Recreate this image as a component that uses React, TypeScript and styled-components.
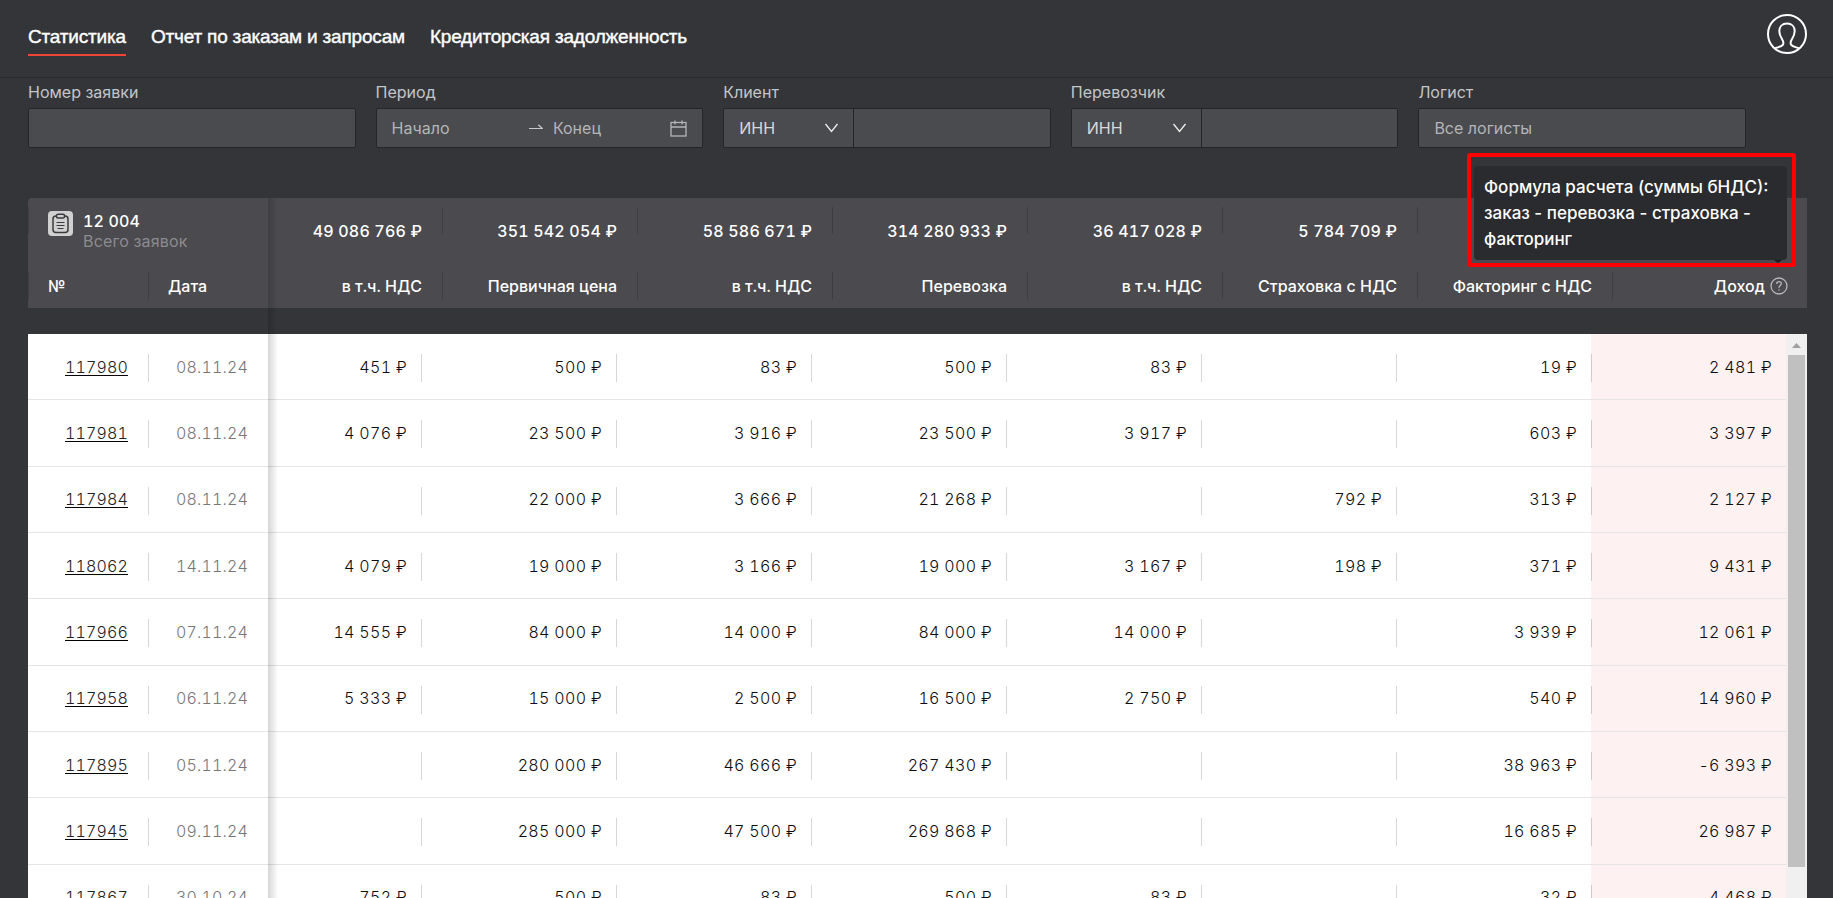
import React from "react";
import styled, { createGlobalStyle } from "styled-components";

const GlobalStyle = createGlobalStyle`
  * { box-sizing: border-box; }
  html, body { margin: 0; background: #343539; }
  body, input, select, button {
    font-family: Inter, "Noto Sans", sans-serif;
    font-size: 16px;
    line-height: 24px;
  }
`;

const Page = styled.div`
  display: flex;
  flex-direction: column;
  height: 100vh;
  overflow: hidden;
  color: #fff;
  background: #343539;
`;

const TopBar = styled.header`
  display: flex;
  justify-content: space-between;
  align-items: flex-start;
  flex: none;
  height: 78px;
  padding: 14px 26px 0 28px;
  border-bottom: 1px solid #2a2b2e;
`;

const Nav = styled.nav`
  display: flex;
  gap: 25px;
  padding-top: 11px;
`;

const NavLink = styled.a<{ $active?: boolean }>`
  padding-bottom: 5px;
  border-bottom: 2px solid ${(p) => (p.$active ? "#f04438" : "transparent")};
  color: #fff;
  font-family: "Liberation Sans", Arial, sans-serif;
  font-size: 19px;
  line-height: 24px;
  letter-spacing: -0.01em;
  -webkit-text-stroke: 0.4px #fff;
  text-decoration: none;
`;

const IconButton = styled.button`
  display: flex;
  padding: 0;
  border: 0;
  background: none;
  color: inherit;
  cursor: pointer;
`;

const Filters = styled.form`
  display: grid;
  grid-template-columns: repeat(5, 1fr);
  gap: 20px;
  flex: none;
  padding: 2px 87px 50px 28px;
`;

const Field = styled.div`
  display: flex;
  flex-direction: column;
  gap: 4px;
  min-width: 0;
`;

const Label = styled.label`
  color: #c4c5c7;
`;

const Control = styled.div`
  display: flex;
  align-items: center;
  height: 40px;
  border: 1px solid #242528;
  border-radius: 2px;
  background: #4a4b4e;
  color: #c4c5c7;
`;

const TextInput = styled.input`
  flex: 1;
  width: 0;
  min-width: 0;
  height: 100%;
  padding: 0 15px;
  border: 0;
  outline: none;
  background: none;
  color: #e4e4e6;
  &::placeholder { color: #b4b5b7; opacity: 1; }
`;

const RangeIcon = styled.span`
  display: flex;
  flex: none;
  padding-right: 15px;
`;

const RangeArrow = styled.span`
  display: flex;
  flex: none;
`;

const RangeStart = styled(TextInput)`
  flex: 137;
  padding: 0 0 0 15px;
`;

const RangeEnd = styled(TextInput)`
  flex: 117;
  padding: 0 0 0 10px;
`;

const SelectBox = styled.span`
  display: grid;
  align-items: center;
  flex: none;
  width: 130px;
  height: 100%;
  border-right: 1px solid #242528;
  & > * { grid-area: 1 / 1; }
  & > svg { justify-self: end; margin-right: 14px; pointer-events: none; }
`;

const Select = styled.select`
  width: 100%;
  height: 100%;
  padding: 0 15px;
  border: 0;
  appearance: none;
  outline: none;
  background: none;
  color: #d8d8da;
`;

const Board = styled.main`
  position: relative;
  display: flex;
  flex-direction: column;
  flex: 1;
  min-height: 0;
  gap: 26px;
  margin: 0 26px 0 28px;
`;

const StickyShadow = styled.div`
  position: absolute;
  top: 0;
  bottom: 0;
  left: 240px;
  width: 10px;
  background: linear-gradient(to right, rgba(0, 0, 0, 0.16), rgba(0, 0, 0, 0));
  pointer-events: none;
`;

const HeadPanel = styled.div`
  position: relative;
  flex: none;
`;

const Table = styled.table`
  width: 100%;
  border-collapse: separate;
  border-spacing: 0;
  table-layout: fixed;
  font-variant-numeric: tabular-nums;
`;

const HeadTable = styled(Table)`
  border-radius: 4px 0 0 0;
  background: #4b4a4e;
`;

const Rule = `
  background-image: linear-gradient(#3e3e42, #3e3e42);
  background-repeat: no-repeat;
  background-position: 0 9px;
`;

const HeadCell = styled.th<{ $left?: boolean; $ruled?: boolean }>`
  height: 45px;
  padding: 0 20px;
  text-align: ${(p) => (p.$left ? "left" : "right")};
  font-weight: 500;
  white-space: nowrap;
  ${Rule}
  background-size: ${(p) => (p.$ruled ? "1px 27px" : "0 0")};
`;

const TotalCell = styled.td<{ $ruled?: boolean }>`
  height: 65px;
  padding: 0 20px;
  text-align: right;
  font-weight: 500;
  letter-spacing: 0.01em;
  white-space: nowrap;
  ${Rule}
  background-size: ${(p) => (p.$ruled ? "1px 27px" : "0 0")};
`;

const Summary = styled.div`
  display: flex;
  align-items: flex-start;
  gap: 10px;
  text-align: left;
  line-height: 20px;
`;

const SummaryLabel = styled.div`
  color: #8c8c90;
  font-weight: 400;
`;

const Caption = styled.span`
  display: flex;
  justify-content: flex-end;
  align-items: center;
  gap: 5px;
`;

const IncomeHead = styled(HeadCell)`
  padding-right: 19px;
`;

const BodyPanel = styled.div`
  display: flex;
  flex: 1;
  min-height: 0;
  background: #fff;
`;

const BodyScroll = styled.div`
  flex: 1;
  min-width: 0;
  overflow: hidden;
`;

const BodyTable = styled(Table)`
  height: 597px;
`;

const Cell = styled.td<{ $tone?: "muted" | "income"; $ruled?: boolean; $pinned?: boolean }>`
  height: 66px;
  padding: 0 ${(p) => (p.$pinned ? 20 : 14)}px 0 0;
  border-bottom: 1px solid #e5e5e5;
  background-color: ${(p) => (p.$tone === "income" ? "#fdf1f1" : "#fff")};
  background-image: linear-gradient(rgba(0, 0, 0, 0.16), rgba(0, 0, 0, 0.16));
  background-repeat: no-repeat;
  background-position: 0 20px;
  background-size: ${(p) => (p.$ruled ? "1px 28px" : "0 0")};
  color: ${(p) => (p.$tone === "muted" ? "#77777a" : "#0c0c0e")};
  font-weight: 300;
  letter-spacing: ${(p) => (p.$pinned ? "0.01em" : "0.02em")};
  text-align: right;
  white-space: nowrap;
`;

const OrderLink = styled.a`
  display: inline-block;
  height: 19px;
  border-bottom: 1px solid #000;
  color: #222;
  line-height: 21px;
  text-decoration: none;
`;

const Scrollbar = styled.div`
  display: flex;
  flex-direction: column;
  align-items: center;
  flex: none;
  width: 21px;
  padding-bottom: 31px;
  background: #f0f0f0;
`;

const ScrollArrow = styled.svg`
  flex: none;
  margin: 9px 0 7px;
`;

const Thumb = styled.div`
  flex: 1;
  width: 17px;
  background: #c0c0c0;
`;

const Frame = styled.div`
  position: absolute;
  right: 11px;
  bottom: 41px;
  z-index: 2;
  width: 329px;
  padding: 9px 5px 3px 3px;
  border: 4px solid #fe0000;
  border-radius: 3px;
`;

const Tooltip = styled.div`
  position: relative;
  padding: 8px 10px;
  border-radius: 4px;
  background: #2a2b2e;
  font-size: 17px;
  font-weight: 500;
  line-height: 26px;
  &::after {
    content: "";
    position: absolute;
    right: 5px;
    top: 100%;
    border: 4px solid transparent;
    border-top: 3px solid #1c1d1f;
    border-bottom: 0;
  }
`;

const UserIcon = () => (
  <svg width="40" height="40" viewBox="0 0 40 40" fill="none" stroke="#fff" strokeWidth="2">
    <circle cx="20" cy="20" r="19" />
    <path d="M8 34.300c2.500-1.100 6.500-1.500 7.800-3.400 1.200-1.800.3-4-.7-5.600C13.200 22.300 12.300 19.800 12.300 17c0-4.500 3-7.400 7.700-7.400s7.700 2.900 7.700 7.400c0 2.800-.9 5.300-2.800 8.300-1 1.600-1.900 3.800-.7 5.600 1.300 1.900 5.300 2.300 7.800 3.400" />
  </svg>
);

const ClipboardIcon = () => (
  <svg width="25" height="25" viewBox="0 0 25 25" fill="none">
    <rect width="25" height="25" rx="4" fill="#d0d0d1" />
    <rect x="5" y="5" width="15" height="16.500" rx="3" stroke="#3b3b3f" strokeWidth="1.500" />
    <rect x="8.500" y="3.300" width="8" height="3.800" rx="1.500" fill="#d0d0d1" stroke="#3b3b3f" strokeWidth="1.500" />
    <path d="M8.500 11.500h8M8.500 14.500h8M9.500 17.500h6" stroke="#3b3b3f" strokeWidth="1.200" />
  </svg>
);

const ChevronIcon = () => (
  <svg width="14" height="12" viewBox="0 0 14 12" fill="none" stroke="#f0f0f0" strokeWidth="1.300">
    <path d="M.5 2l6 7.500 6-7.500" />
  </svg>
);

const ArrowIcon = () => (
  <svg width="14" height="10" viewBox="0 0 14 10" fill="none" stroke="#c8c8ca" strokeWidth="1.200">
    <path d="M0 5.500h13.300L9.300 1.700" />
  </svg>
);

const CalendarIcon = () => (
  <svg width="17" height="17" viewBox="0 0 17 17" fill="none" stroke="#b4b5b7" strokeWidth="1.300">
    <rect x="1" y="2.500" width="15" height="13.500" />
    <path d="M1 7h15M5 .5v4M12 .5v4" />
  </svg>
);

const HelpIcon = () => (
  <svg width="18" height="18" viewBox="0 0 18 18" fill="none" stroke="#b8b8ba" strokeWidth="1.300">
    <circle cx="9" cy="9" r="8" />
    <path d="M6.700 7c0-1.400 1-2.300 2.300-2.300s2.300.9 2.300 2.100c0 1.600-2.300 1.800-2.300 3.500v.4M9 12.300v1.200" />
  </svg>
);

const totals = ["49 086 766", "351 542 054", "58 586 671", "314 280 933", "36 417 028", "5 784 709", "", ""];

const columns = [
  "в т.ч. НДС",
  "Первичная цена",
  "в т.ч. НДС",
  "Перевозка",
  "в т.ч. НДС",
  "Страховка с НДС",
  "Факторинг с НДС",
];

const rows: [string, string, string[]][] = [
  ["117980", "08.11.24", ["451", "500", "83", "500", "83", "", "19", "2 481"]],
  ["117981", "08.11.24", ["4 076", "23 500", "3 916", "23 500", "3 917", "", "603", "3 397"]],
  ["117984", "08.11.24", ["", "22 000", "3 666", "21 268", "", "792", "313", "2 127"]],
  ["118062", "14.11.24", ["4 079", "19 000", "3 166", "19 000", "3 167", "198", "371", "9 431"]],
  ["117966", "07.11.24", ["14 555", "84 000", "14 000", "84 000", "14 000", "", "3 939", "12 061"]],
  ["117958", "06.11.24", ["5 333", "15 000", "2 500", "16 500", "2 750", "", "540", "14 960"]],
  ["117895", "05.11.24", ["", "280 000", "46 666", "267 430", "", "", "38 963", "-6 393"]],
  ["117945", "09.11.24", ["", "285 000", "47 500", "269 868", "", "", "16 685", "26 987"]],
  ["117867", "30.10.24", ["752", "500", "83", "500", "83", "", "32", "4 468"]],
];

const money = (value: string) => (value ? `${value} ₽` : "");

const Col = styled.col<{ $w?: number }>`
  width: ${(p) => (p.$w ? `${p.$w}px` : "auto")};
`;

const Columns = () => (
  <colgroup>
    <Col $w={120} />
    <Col $w={120} />
    <Col />
    {[1, 2, 3, 4, 5, 6, 7].map((n) => (
      <Col key={n} $w={195} />
    ))}
  </colgroup>
);

const PartyFilter = ({ id, label }: { id: string; label: string }) => (
  <Field>
    <Label htmlFor={id}>{label}</Label>
    <Control>
      <SelectBox>
        <Select aria-label={`${label}: поле поиска`} defaultValue="ИНН">
          <option>ИНН</option>
        </Select>
        <ChevronIcon />
      </SelectBox>
      <TextInput id={id} />
    </Control>
  </Field>
);

export default function App() {
  return (
    <Page>
      <GlobalStyle />
      <TopBar>
        <Nav>
          <NavLink href="#stats" $active>Статистика</NavLink>
          <NavLink href="#orders">Отчет по заказам и запросам</NavLink>
          <NavLink href="#debt">Кредиторская задолженность</NavLink>
        </Nav>
        <IconButton type="button" aria-label="Профиль"><UserIcon /></IconButton>
      </TopBar>

      <Filters>
        <Field>
          <Label htmlFor="order">Номер заявки</Label>
          <Control><TextInput id="order" /></Control>
        </Field>
        <Field>
          <Label htmlFor="from">Период</Label>
          <Control>
            <RangeStart id="from" placeholder="Начало" />
            <RangeArrow><ArrowIcon /></RangeArrow>
            <RangeEnd aria-label="Конец периода" placeholder="Конец" />
            <RangeIcon><CalendarIcon /></RangeIcon>
          </Control>
        </Field>
        <PartyFilter id="client" label="Клиент" />
        <PartyFilter id="carrier" label="Перевозчик" />
        <Field>
          <Label htmlFor="logist">Логист</Label>
          <Control><TextInput id="logist" placeholder="Все логисты" /></Control>
        </Field>
      </Filters>

      <Board>
        <HeadPanel>
          <HeadTable>
            <Columns />
            <thead>
              <tr>
                <TotalCell colSpan={2} $ruled>
                  <Summary>
                    <ClipboardIcon />
                    <div>
                      12 004
                      <SummaryLabel>Всего заявок</SummaryLabel>
                    </div>
                  </Summary>
                </TotalCell>
                {totals.map((value, i) => (
                  <TotalCell key={i} $ruled={i > 0}>{money(value)}</TotalCell>
                ))}
              </tr>
              <tr>
                <HeadCell scope="col" $left $ruled>№</HeadCell>
                <HeadCell scope="col" $left $ruled>Дата</HeadCell>
                {columns.map((title, i) => (
                  <HeadCell key={i} scope="col" $ruled={i > 0}>{title}</HeadCell>
                ))}
                <IncomeHead scope="col" $ruled>
                  <Caption>
                    Доход
                    <IconButton type="button" aria-label="Формула расчета" aria-describedby="formula">
                      <HelpIcon />
                    </IconButton>
                  </Caption>
                </IncomeHead>
              </tr>
            </thead>
          </HeadTable>
          <Frame>
            <Tooltip id="formula" role="tooltip">
              Формула расчета (суммы бНДС): заказ - перевозка - страховка - факторинг
            </Tooltip>
          </Frame>
        </HeadPanel>

        <BodyPanel>
          <BodyScroll>
            <BodyTable>
              <Columns />
              <tbody>
                {rows.map(([id, date, values]) => (
                  <tr key={id}>
                    <Cell $pinned><OrderLink href={`#${id}`}>{id}</OrderLink></Cell>
                    <Cell $pinned $ruled $tone="muted">{date}</Cell>
                    {values.map((value, i) => (
                      <Cell key={i} $ruled={i > 0} $tone={i === 7 ? "income" : undefined}>
                        {money(value)}
                      </Cell>
                    ))}
                  </tr>
                ))}
              </tbody>
            </BodyTable>
          </BodyScroll>
          <Scrollbar aria-hidden="true">
            <ScrollArrow width="9" height="5" viewBox="0 0 9 5"><path d="M0 5L4.500 0 9 5z" fill="#a0a0a0" /></ScrollArrow>
            <Thumb />
          </Scrollbar>
        </BodyPanel>
        <StickyShadow />
      </Board>
    </Page>
  );
}
